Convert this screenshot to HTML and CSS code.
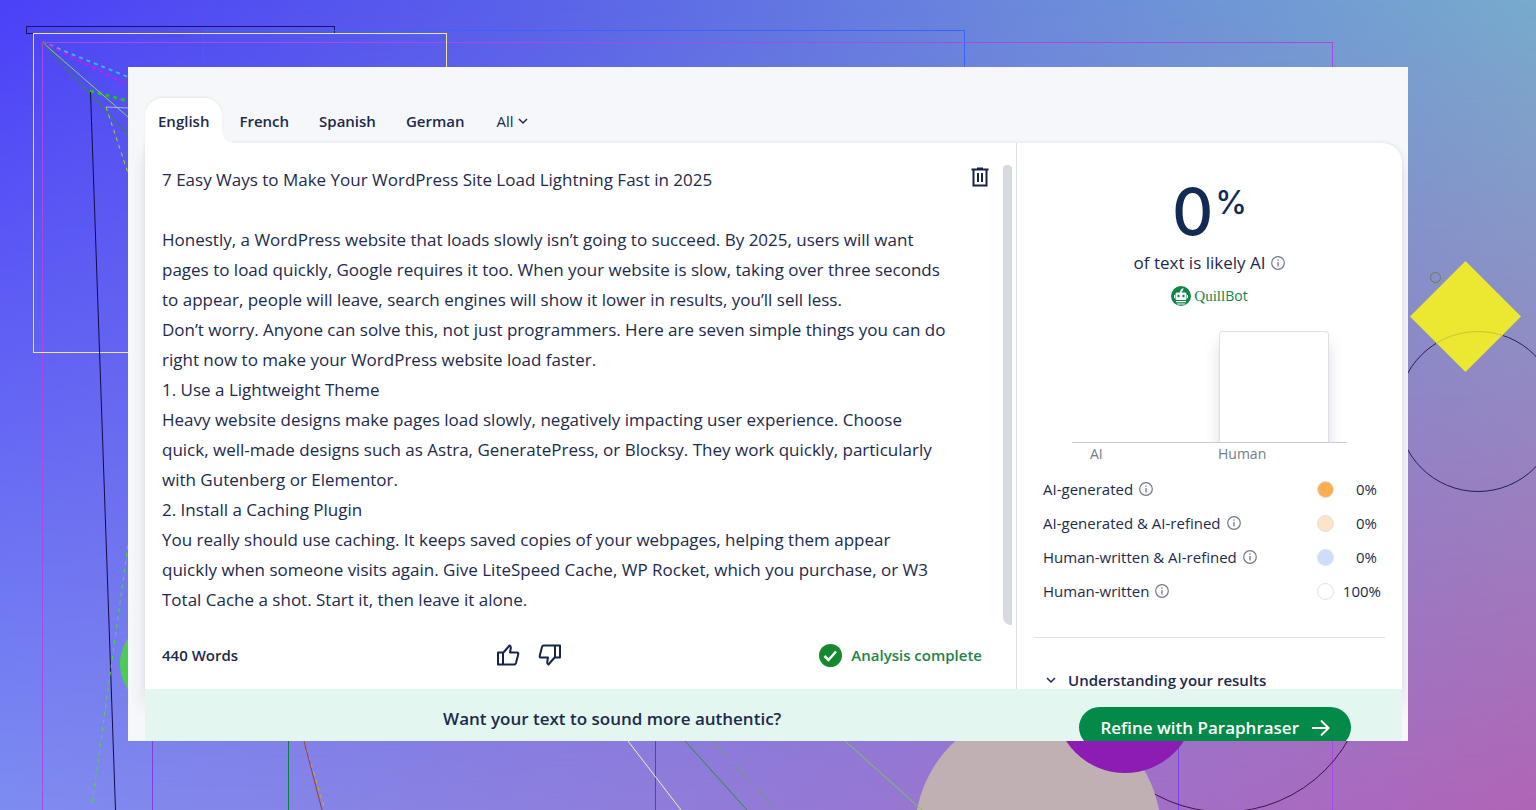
FILE: index.html
```html
<!DOCTYPE html>
<html lang="en">
<head>
    <meta charset="UTF-8">
    <meta name="viewport" content="width=device-width, initial-scale=1.0">
    <title>AI Detector</title>
    <link rel="stylesheet" href="styles.css">
</head>
<body>
    <svg class="backdrop" viewBox="0 0 1536 810" preserveAspectRatio="none" fill="none" aria-hidden="true">
        <rect x="26.5" y="26.5" width="308" height="7" stroke="#1a1266"/>
        <rect x="203.5" y="30.5" width="761" height="400" stroke="#3a62ff"/>
        <rect x="42.5" y="42.5" width="1290" height="800" stroke="#a34be2"/>
        <rect x="33.5" y="33.5" width="413" height="319" stroke="#efe58f"/>
        <path d="M152.5 700V810M1178.5 700V810" stroke="#7c42dc"/>
        <path d="M288.5 700V810M655.5 700V810" stroke="#0d7c42"/>

        <path d="M42 42L128 77" stroke="#3fb4e0" stroke-width="2" stroke-dasharray="4 4"/>
        <path d="M42 42L128 85" stroke="#cf18e8" stroke-width="2" stroke-dasharray="4 4"/>
        <path d="M90 91L128 101" stroke="#14c814" stroke-width="3" stroke-dasharray="4 4"/>
        <path d="M42 42L128 117" stroke="#7fd468"/>
        <path d="M42 42L128 135" stroke="#2f8f20"/>
        <path d="M106 107L128 108" stroke="#a9b6e8"/>
        <path d="M106 107L128 173" stroke="#b4cf2e" stroke-dasharray="4 4"/>
        <path d="M90.5 92L115.5 810" stroke="#140a4a"/>
        <path d="M128 545L92 805" stroke="#46e02c" stroke-dasharray="4 4"/>
        <circle cx="165" cy="664" r="45" fill="#4dcc55"/>

        <path d="M304 741L325 810" stroke="#c3b620" stroke-dasharray="4 4"/>
        <path d="M304 741L322 810" stroke="#a03a40"/>
        <path d="M628 741L681 810" stroke="#f2f0b0"/>
        <path d="M685 741L747 810" stroke="#26932e"/>
        <path d="M712 741L776 810" stroke="#5ca858" stroke-dasharray="22 12"/>

        <circle cx="1224" cy="669" r="143" stroke="#42104e"/>
        <circle cx="1038" cy="832" r="123" fill="#c0b0b3"/>
        <circle cx="1125" cy="703" r="70" fill="#8d1cb4"/>
        <path d="M845 741L922 810" stroke="#6fd050"/>

        <circle cx="1478" cy="411.5" r="80" stroke="#252050"/>
        <circle cx="1435.5" cy="277.5" r="5" stroke="#62805a"/>
        <path d="M1465.500 261L1521 316.500L1465.500 372L1410 316.500Z" fill="#ece832"/>
        <path d="M1436 343.500A80 80 0 0 1 1503 335.500" stroke="#c9c52f"/>
    </svg>

    <main class="window">
        <nav class="tabs">
            <button class="tab active">English</button>
            <button class="tab">French</button>
            <button class="tab">Spanish</button>
            <button class="tab">German</button>
            <button class="tab more">All
                <svg width="10" height="10" viewBox="0 0 10 10" fill="none" stroke="currentColor" stroke-width="1.5"><path d="M1 3l4 4 4-4"/></svg>
            </button>
        </nav>

        <div class="card">
            <section class="editor">
                <div class="editor-body">
                    <textarea class="editor-text" aria-label="Text to analyze" spellcheck="false">7 Easy Ways to Make Your WordPress Site Load Lightning Fast in 2025

Honestly, a WordPress website that loads slowly isn’t going to succeed. By 2025, users will want pages to load quickly, Google requires it too. When your website is slow, taking over three seconds to appear, people will leave, search engines will show it lower in results, you’ll sell less.
Don’t worry. Anyone can solve this, not just programmers. Here are seven simple things you can do right now to make your WordPress website load faster.
1. Use a Lightweight Theme
Heavy website designs make pages load slowly, negatively impacting user experience. Choose quick, well-made designs such as Astra, GeneratePress, or Blocksy. They work quickly, particularly with Gutenberg or Elementor.
2. Install a Caching Plugin
You really should use caching. It keeps saved copies of your webpages, helping them appear quickly when someone visits again. Give LiteSpeed Cache, WP Rocket, which you purchase, or W3 Total Cache a shot. Start it, then leave it alone.</textarea>
                    <button class="icon-button" aria-label="Delete text">
                        <svg width="18" height="20" viewBox="0 0 18 20" fill="none" stroke="currentColor" stroke-width="2"><path d="M.5 2.500h17M6 1.500h6M2.500 3v15.500h13V3M7 6v9M11 6v9"/></svg>
                    </button>
                    <div class="scrollbar"></div>
                </div>
                <div class="editor-footer">
                    <span class="word-count">440 Words</span>
                    <div class="feedback">
                        <button class="icon-button" aria-label="Good result">
                            <svg width="24" height="24" viewBox="0 0 24 24" fill="none" stroke="currentColor" stroke-width="2" stroke-linejoin="round"><path d="M2 9.500h5v12H2zM7 10l6.500-7.500c1 .5 1.500 1.300 1.300 2.500L14 9.500h7c1 0 1.500.7 1.300 1.600L20 20c-.3 1-.8 1.500-1.800 1.500H7"/></svg>
                        </button>
                        <button class="icon-button" aria-label="Bad result">
                            <svg width="24" height="24" viewBox="0 0 24 24" fill="none" stroke="currentColor" stroke-width="2" stroke-linejoin="round"><path d="M22 14.500h-5v-12h5zM17 14l-6.500 7.500c-1-.5-1.500-1.300-1.300-2.500l.8-4.500H3c-1 0-1.500-.7-1.300-1.600L4 4c.3-1 .8-1.500 1.800-1.500H17"/></svg>
                        </button>
                    </div>
                    <div class="status">
                        <svg width="23" height="23" viewBox="0 0 23 23"><circle cx="11.500" cy="11.500" r="11.500" fill="#16882f"/><path d="M5.500 12l4 4 7.500-8.500" fill="none" stroke="#fff" stroke-width="2.500"/></svg>
                        <span>Analysis complete</span>
                    </div>
                </div>
            </section>

            <aside class="results">
                <div class="score">0<sup>%</sup></div>
                <p class="score-label">of text is likely AI
                    <svg class="info" viewBox="0 0 14 14"><use href="#info-icon"/></svg>
                </p>
                <div class="brand">
                    <svg width="20" height="20" viewBox="0 0 20 20">
                        <circle cx="10" cy="10" r="10" fill="#10854a"/>
                        <path d="M9 7c0-2.500 1-4.300 3.500-5-.2 2-.8 3.200-2 4V7z" fill="#fff"/>
                        <rect x="4.500" y="6.500" width="11" height="7.500" rx="1.500" fill="#fff"/>
                        <path d="M3.500 9v3M16.500 9v3" stroke="#fff"/>
                        <circle cx="7.500" cy="10" r="1.200" fill="#10854a"/>
                        <circle cx="12.500" cy="10" r="1.200" fill="#10854a"/>
                        <path d="M5 15.700h10M6 18h8" stroke="#fff" stroke-width="1.200"/>
                    </svg>
                    <span><span class="quill">Quill</span>Bot</span>
                </div>

                <div class="chart">
                    <div class="plot"><div class="bar"></div></div>
                    <div class="axis"><span>AI</span><span>Human</span></div>
                </div>

                <ul class="legend">
                    <li>
                        <span>AI-generated</span>
                        <svg class="info" viewBox="0 0 14 14"><use href="#info-icon"/></svg>
                        <i class="dot ai"></i>
                        <span class="value">0%</span>
                    </li>
                    <li>
                        <span>AI-generated &amp; AI-refined</span>
                        <svg class="info" viewBox="0 0 14 14"><use href="#info-icon"/></svg>
                        <i class="dot ai-refined"></i>
                        <span class="value">0%</span>
                    </li>
                    <li>
                        <span>Human-written &amp; AI-refined</span>
                        <svg class="info" viewBox="0 0 14 14"><use href="#info-icon"/></svg>
                        <i class="dot human-refined"></i>
                        <span class="value">0%</span>
                    </li>
                    <li>
                        <span>Human-written</span>
                        <svg class="info" viewBox="0 0 14 14"><use href="#info-icon"/></svg>
                        <i class="dot"></i>
                        <span class="value full">100%</span>
                    </li>
                </ul>

                <button class="understanding">
                    <svg width="10" height="10" viewBox="0 0 10 10" fill="none" stroke="currentColor" stroke-width="1.500"><path d="M1 3l4 4 4-4"/></svg>
                    Understanding your results
                </button>
            </aside>
        </div>

        <div class="banner">
            <p>Want your text to sound more authentic?</p>
            <button class="refine">Refine with Paraphraser
                <svg width="18" height="18" viewBox="0 0 18 18" fill="none" stroke="currentColor" stroke-width="2"><path d="M0 9h16M9 1.500L16.500 9 9 16.500"/></svg>
            </button>
        </div>
    </main>

    <svg width="0" height="0" class="defs">
        <symbol id="info-icon" viewBox="0 0 14 14">
            <circle cx="7" cy="7" r="6.300" fill="none" stroke="currentColor" stroke-width="1.200"/>
            <path d="M7 6v4.500M7 3.500v1.300" stroke="currentColor" stroke-width="1.300"/>
        </symbol>
    </svg>
</body>
</html>
```
FILE: styles.css
```css
* {
    box-sizing: border-box;
}
body {
    margin: 0;
    min-height: 100vh;
    padding: 67px 128px 68px;
    position: relative;
    overflow: hidden;
    font-family: "Open Sans", sans-serif;
    font-size: 15px;
    color: #1d2a4d;
    background: linear-gradient(to right, #4b41f7, #5960ea 33%, #6b8bdb 68%, #78abcd);
}
body::before {
    content: "";
    position: absolute;
    inset: 0;
    background: linear-gradient(to right, #7d8cf1, #9578d4 55%, #b064b6);
    mask-image: linear-gradient(to bottom, transparent, #000);
}
.backdrop {
    position: absolute;
    top: 0;
    left: 0;
    width: 100%;
    height: 100%;
}
.defs {
    position: absolute;
}
button {
    border: 0;
    padding: 0;
    background: none;
    font: inherit;
    color: inherit;
    cursor: pointer;
}
p {
    margin: 0;
}

.window {
    position: relative;
    padding: 31px 6px 0 17px;
    background: #f6f7fa;
    overflow: hidden;
}

/* language tabs */
.tabs {
    display: flex;
    height: 45px;
    position: relative;
    z-index: 1;
}
.tab {
    padding: 0 14px;
    margin-right: 2px;
    font-weight: 600;
}
.tab.active {
    position: relative;
    padding: 0 13px;
    margin-right: 3px;
    background: #fff;
    border-radius: 18px 18px 0 0;
    box-shadow: 0 -1px 2px #e6e8ec;
}
.tab.active::after {
    content: "";
    position: absolute;
    left: 100%;
    bottom: 0;
    width: 10px;
    height: 10px;
    background: radial-gradient(circle at top right, #f6f7fa 9px, #fff 10px);
}
.tab.more {
    display: flex;
    align-items: center;
    gap: 4px;
    margin-left: 2px;
    font-weight: 500;
}

.card {
    display: grid;
    grid-template-columns: 1fr 385px;
    background: #fff;
    border-top-right-radius: 20px;
    box-shadow: 0 0 4px #dcdee4, 0 16px 16px #dcdee4;
}

/* text editor */
.editor {
    padding: 22px 4px 0 17px;
    border-right: 1px solid #dcdfe5;
}
.editor-body {
    display: flex;
    align-items: flex-start;
    height: 460px;
}
.editor-text {
    flex: 1;
    height: 450px;
    padding: 0 23px 0 0;
    border: 0;
    outline: 0;
    resize: none;
    overflow: hidden;
    background: none;
    font-family: inherit;
    font-size: 17px;
    line-height: 30px;
    color: #1d2a4d;
}
.icon-button {
    display: flex;
    color: #16244a;
}
.editor-body .icon-button {
    margin: 2px 14px 0 0;
}
.scrollbar {
    width: 9px;
    height: 100%;
    border-radius: 4px 4px 0 8px;
    background: #d8dae2;
}
.editor-footer {
    display: flex;
    justify-content: space-between;
    align-items: center;
    height: 60px;
    margin-bottom: 4px;
    padding-right: 30px;
}
.word-count {
    font-weight: 600;
}
.feedback {
    display: flex;
    gap: 18px;
}
.status {
    display: flex;
    align-items: center;
    gap: 9px;
    font-weight: 600;
    color: #22834a;
}

/* results */
.results {
    padding: 37px 17px 0;
}
.score {
    display: flex;
    justify-content: center;
    gap: 2px;
    font-family: Inter, sans-serif;
    font-size: 64px;
    font-weight: 500;
    line-height: 64px;
    color: #132a52;
}
.score sup {
    font-size: 32px;
    line-height: 46px;
}
.score-label {
    display: flex;
    justify-content: center;
    align-items: center;
    gap: 6px;
    margin-top: 7px;
    font-size: 17px;
    line-height: 24px;
}
.info {
    width: 14px;
    height: 14px;
    color: #6f788c;
}
.brand {
    display: flex;
    justify-content: center;
    align-items: center;
    gap: 3px;
    margin-top: 11px;
    line-height: 20px;
    font-size: 14px;
    color: #10854a;
}
.quill {
    font-family: "Liberation Serif", serif;
    font-size: 15px;
}
.chart {
    margin: 25px 38px 0;
}
.plot {
    display: flex;
    justify-content: flex-end;
    height: 112px;
    padding-right: 18px;
    border-bottom: 1px solid #c9ccd4;
    overflow: hidden;
}
.bar {
    width: 110px;
    background: #fff;
    border: 1px solid #dddfe4;
    border-bottom: 0;
    border-radius: 4px 4px 0 0;
    box-shadow: 0 12px 16px #dcdde0;
}
.axis {
    display: grid;
    grid-template-columns: 128px 1fr;
    padding-left: 18px;
    font-size: 14px;
    line-height: 22px;
    color: #737b8c;
}
.legend {
    list-style: none;
    margin: 0;
    padding: 7px 0 29px 9px;
    border-bottom: 1px solid #dfe1e6;
}
.legend li {
    display: flex;
    align-items: center;
    gap: 6px;
    height: 34px;
}
.dot {
    width: 17px;
    height: 17px;
    margin-left: auto;
    border: 1px solid #dfe1e6;
    border-radius: 50%;
}
.dot.ai {
    background: #fdae4e;
}
.dot.ai-refined {
    background: #fce4c6;
}
.dot.human-refined {
    background: #ccdefc;
}
.value {
    width: 41px;
    margin-right: 4px;
    padding-right: 4px;
    text-align: right;
    font-weight: 500;
}
.value.full {
    padding-right: 0;
}
.understanding {
    display: flex;
    align-items: center;
    gap: 12px;
    margin-top: 33px;
    padding-left: 12px;
    line-height: 18px;
    font-weight: 600;
}

/* paraphraser banner */
.banner {
    position: relative;
    display: flex;
    align-items: flex-start;
    height: 52px;
    padding: 18px 51px 0 0;
    background: #e4f6f0;
    overflow: hidden;
}
.banner p {
    flex: 1;
    text-align: center;
    font-size: 17px;
    font-weight: 600;
    line-height: 24px;
}
.refine {
    display: flex;
    align-items: center;
    gap: 13px;
    height: 41px;
    padding: 0 21px;
    border-radius: 21px;
    background: #038a48;
    color: #fff;
    font-size: 17px;
    font-weight: 600;
}
```
